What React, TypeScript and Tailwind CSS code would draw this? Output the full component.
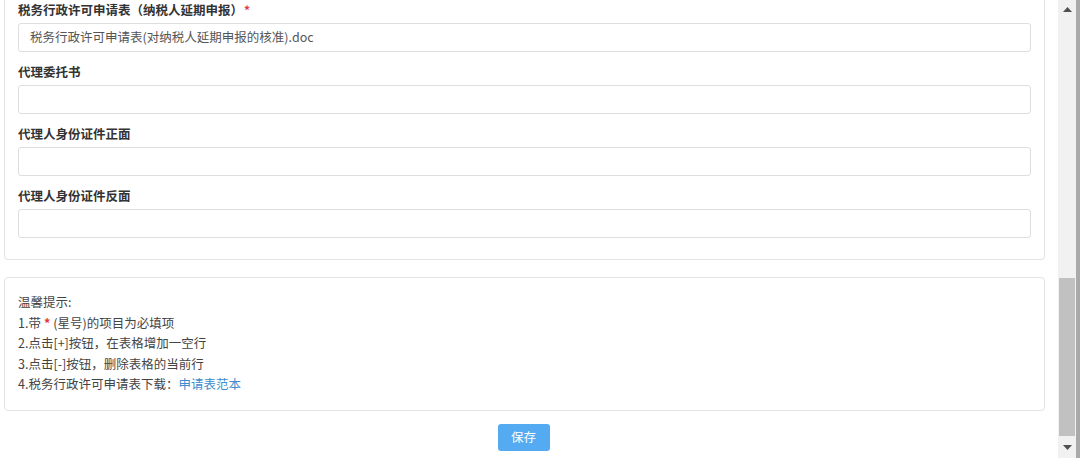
import React from "react";

const font = { fontFamily: '"Microsoft YaHei", "Noto Sans CJK SC", "Liberation Sans", sans-serif' };

function Field({ label, required, value }: { label: string; required?: boolean; value?: string }) {
  return (
    <div className="flex flex-col">
      <div className="flex items-center h-[18px] text-[12.5px] font-bold text-[#333]">
        <span>{label}</span>
        {required && <span className="ml-[1px] text-[#e4393c] text-[12px]">*</span>}
      </div>
      <div className="mt-[4px] h-[29px] border border-[#dedede] rounded-[3px] bg-white flex items-center pl-[11px] text-[12.5px] text-[#555]">
        {value}
      </div>
    </div>
  );
}

export default function App() {
  return (
    <div className="w-[1080px] h-[458px] overflow-hidden flex bg-white" style={font}>
      <div className="w-[1058px] h-full flex flex-col">
        <div className="ml-[4px] w-[1041px] border-x border-b border-[#e3e3e3] rounded-b-[4px] pt-[1px] pb-[21px] px-[13px] flex flex-col gap-[11px]">
          <Field label="税务行政许可申请表（纳税人延期申报）" required value="税务行政许可申请表(对纳税人延期申报的核准).doc" />
          <Field label="代理委托书" />
          <Field label="代理人身份证件正面" />
          <Field label="代理人身份证件反面" />
        </div>
        <div className="ml-[4px] mt-[17px] w-[1041px] border border-[#e3e3e3] rounded-[4px] pt-[14px] pb-[15px] px-[13px] text-[12.5px] leading-[20.5px] text-[#444]">
          <div>温馨提示:</div>
          <div>
            1.带<span className="text-[#e4393c] font-bold mx-[3px]">*</span>(星号)的项目为必填项
          </div>
          <div>2.点击[+]按钮，在表格增加一空行</div>
          <div>3.点击[-]按钮，删除表格的当前行</div>
          <div>
            4.税务行政许可申请表下载：<span className="text-[#3d8ccc]">申请表范本</span>
          </div>
        </div>
        <div className="ml-[4px] w-[1041px] flex justify-center mt-[13px]">
          <button className="w-[52px] h-[27px] rounded-[3px] bg-[#55abf1] text-white text-[12.5px] mr-[2px]">保存</button>
        </div>
      </div>
      <div className="w-[18px] h-full bg-[#f1f1f1] flex flex-col items-center">
        <div className="h-[18px] w-full flex items-center justify-center">
          <svg width="9" height="5" viewBox="0 0 9 5"><polygon points="4.5,0 9,5 0,5" fill="#505050" /></svg>
        </div>
        <div className="flex-1 w-full flex flex-col">
          <div className="h-[260px]" />
          <div className="mx-[1px] h-[158px] bg-[#c1c1c1]" />
        </div>
        <div className="h-[22px] w-full flex items-center justify-center">
          <svg width="9" height="5" viewBox="0 0 9 5"><polygon points="0,0 9,0 4.5,5" fill="#505050" /></svg>
        </div>
      </div>
      <div className="w-[4px] h-full bg-[#a9a9a9]" />
    </div>
  );
}
